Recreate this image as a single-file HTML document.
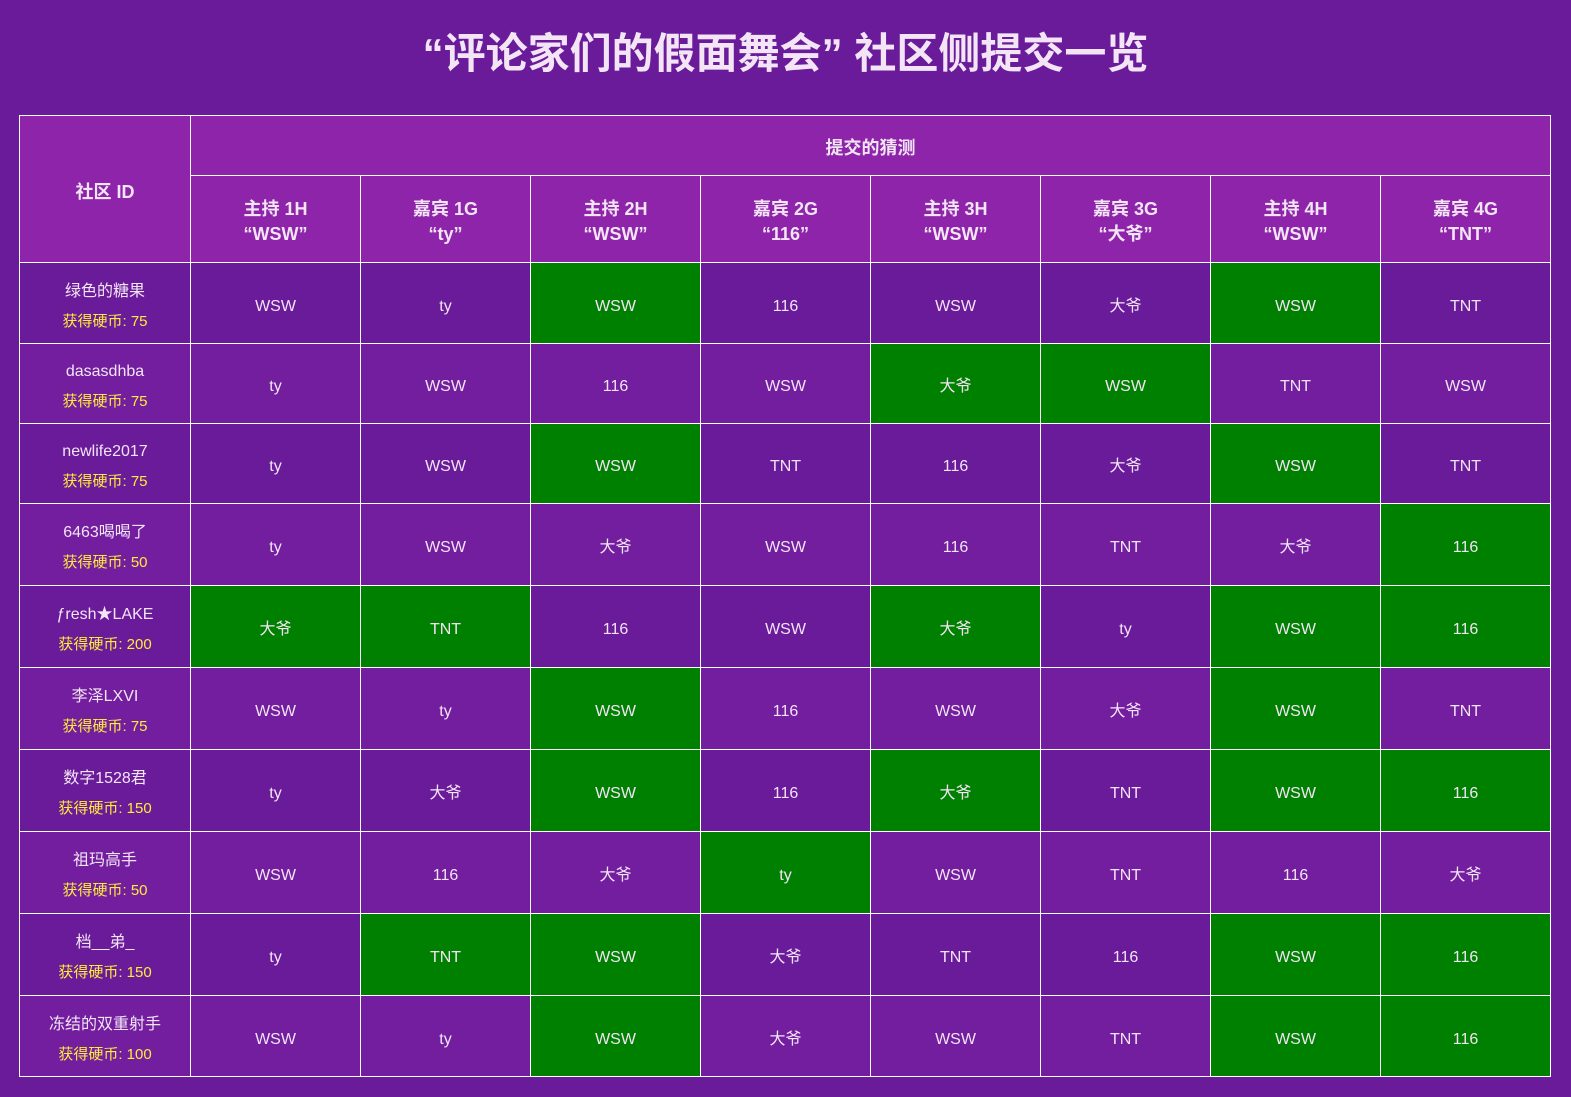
<!DOCTYPE html>
<html><head><meta charset="utf-8">
<style>
html,body{margin:0;padding:0;}
body{width:1571px;height:1097px;background:#6a1b9a;font-family:"Liberation Sans","Noto Sans CJK SC",sans-serif;color:#f3e5f5;overflow:hidden;position:relative;}
h1{margin:0;position:absolute;top:26px;left:0;width:1571px;text-align:center;font-size:42px;line-height:56px;font-weight:bold;color:#f3e5f5;}
table{position:absolute;left:19px;top:115px;width:1531px;border-collapse:collapse;table-layout:fixed;}
td,th{border:1px solid #fff;text-align:center;padding:0;}
th{background:#8e24aa;font-size:18px;font-weight:bold;line-height:25px;padding-top:6px;}
td{font-size:16px;line-height:22px;padding-top:7px;}
tr.o td{background:#6a1b9a;}
tr.e td{background:#721e9f;}
tr td.g{background:#008000;}
.c{color:#ffeb3b;font-size:15px;display:block;margin-top:8px;}
</style></head><body>
<h1>“评论家们的假面舞会” 社区侧提交一览</h1>
<table>
<colgroup><col style="width:171px"><col span="8" style="width:170px"></colgroup>
<tr style="height:60px"><th rowspan="2">社区 ID</th><th colspan="8">提交的猜测</th></tr>
<tr style="height:87px"><th>主持 1H<br>“WSW”</th><th>嘉宾 1G<br>“ty”</th><th>主持 2H<br>“WSW”</th><th>嘉宾 2G<br>“116”</th><th>主持 3H<br>“WSW”</th><th>嘉宾 3G<br>“大爷”</th><th>主持 4H<br>“WSW”</th><th>嘉宾 4G<br>“TNT”</th></tr>
<tr class="o" style="height:81px"><td>绿色的糖果<span class="c">获得硬币: 75</span></td><td>WSW</td><td>ty</td><td class="g">WSW</td><td>116</td><td>WSW</td><td>大爷</td><td class="g">WSW</td><td>TNT</td></tr>
<tr class="e" style="height:80px"><td>dasasdhba<span class="c">获得硬币: 75</span></td><td>ty</td><td>WSW</td><td>116</td><td>WSW</td><td class="g">大爷</td><td class="g">WSW</td><td>TNT</td><td>WSW</td></tr>
<tr class="o" style="height:80px"><td>newlife2017<span class="c">获得硬币: 75</span></td><td>ty</td><td>WSW</td><td class="g">WSW</td><td>TNT</td><td>116</td><td>大爷</td><td class="g">WSW</td><td>TNT</td></tr>
<tr class="e" style="height:82px"><td>6463喝喝了<span class="c">获得硬币: 50</span></td><td>ty</td><td>WSW</td><td>大爷</td><td>WSW</td><td>116</td><td>TNT</td><td>大爷</td><td class="g">116</td></tr>
<tr class="o" style="height:82px"><td>ƒresh★LAKE<span class="c">获得硬币: 200</span></td><td class="g">大爷</td><td class="g">TNT</td><td>116</td><td>WSW</td><td class="g">大爷</td><td>ty</td><td class="g">WSW</td><td class="g">116</td></tr>
<tr class="e" style="height:82px"><td>李泽LXVI<span class="c">获得硬币: 75</span></td><td>WSW</td><td>ty</td><td class="g">WSW</td><td>116</td><td>WSW</td><td>大爷</td><td class="g">WSW</td><td>TNT</td></tr>
<tr class="o" style="height:82px"><td>数字1528君<span class="c">获得硬币: 150</span></td><td>ty</td><td>大爷</td><td class="g">WSW</td><td>116</td><td class="g">大爷</td><td>TNT</td><td class="g">WSW</td><td class="g">116</td></tr>
<tr class="e" style="height:82px"><td>祖玛高手<span class="c">获得硬币: 50</span></td><td>WSW</td><td>116</td><td>大爷</td><td class="g">ty</td><td>WSW</td><td>TNT</td><td>116</td><td>大爷</td></tr>
<tr class="o" style="height:82px"><td>档__弟_<span class="c">获得硬币: 150</span></td><td>ty</td><td class="g">TNT</td><td class="g">WSW</td><td>大爷</td><td>TNT</td><td>116</td><td class="g">WSW</td><td class="g">116</td></tr>
<tr class="e" style="height:81px"><td>冻结的双重射手<span class="c">获得硬币: 100</span></td><td>WSW</td><td>ty</td><td class="g">WSW</td><td>大爷</td><td>WSW</td><td>TNT</td><td class="g">WSW</td><td class="g">116</td></tr>
</table>
</body></html>
